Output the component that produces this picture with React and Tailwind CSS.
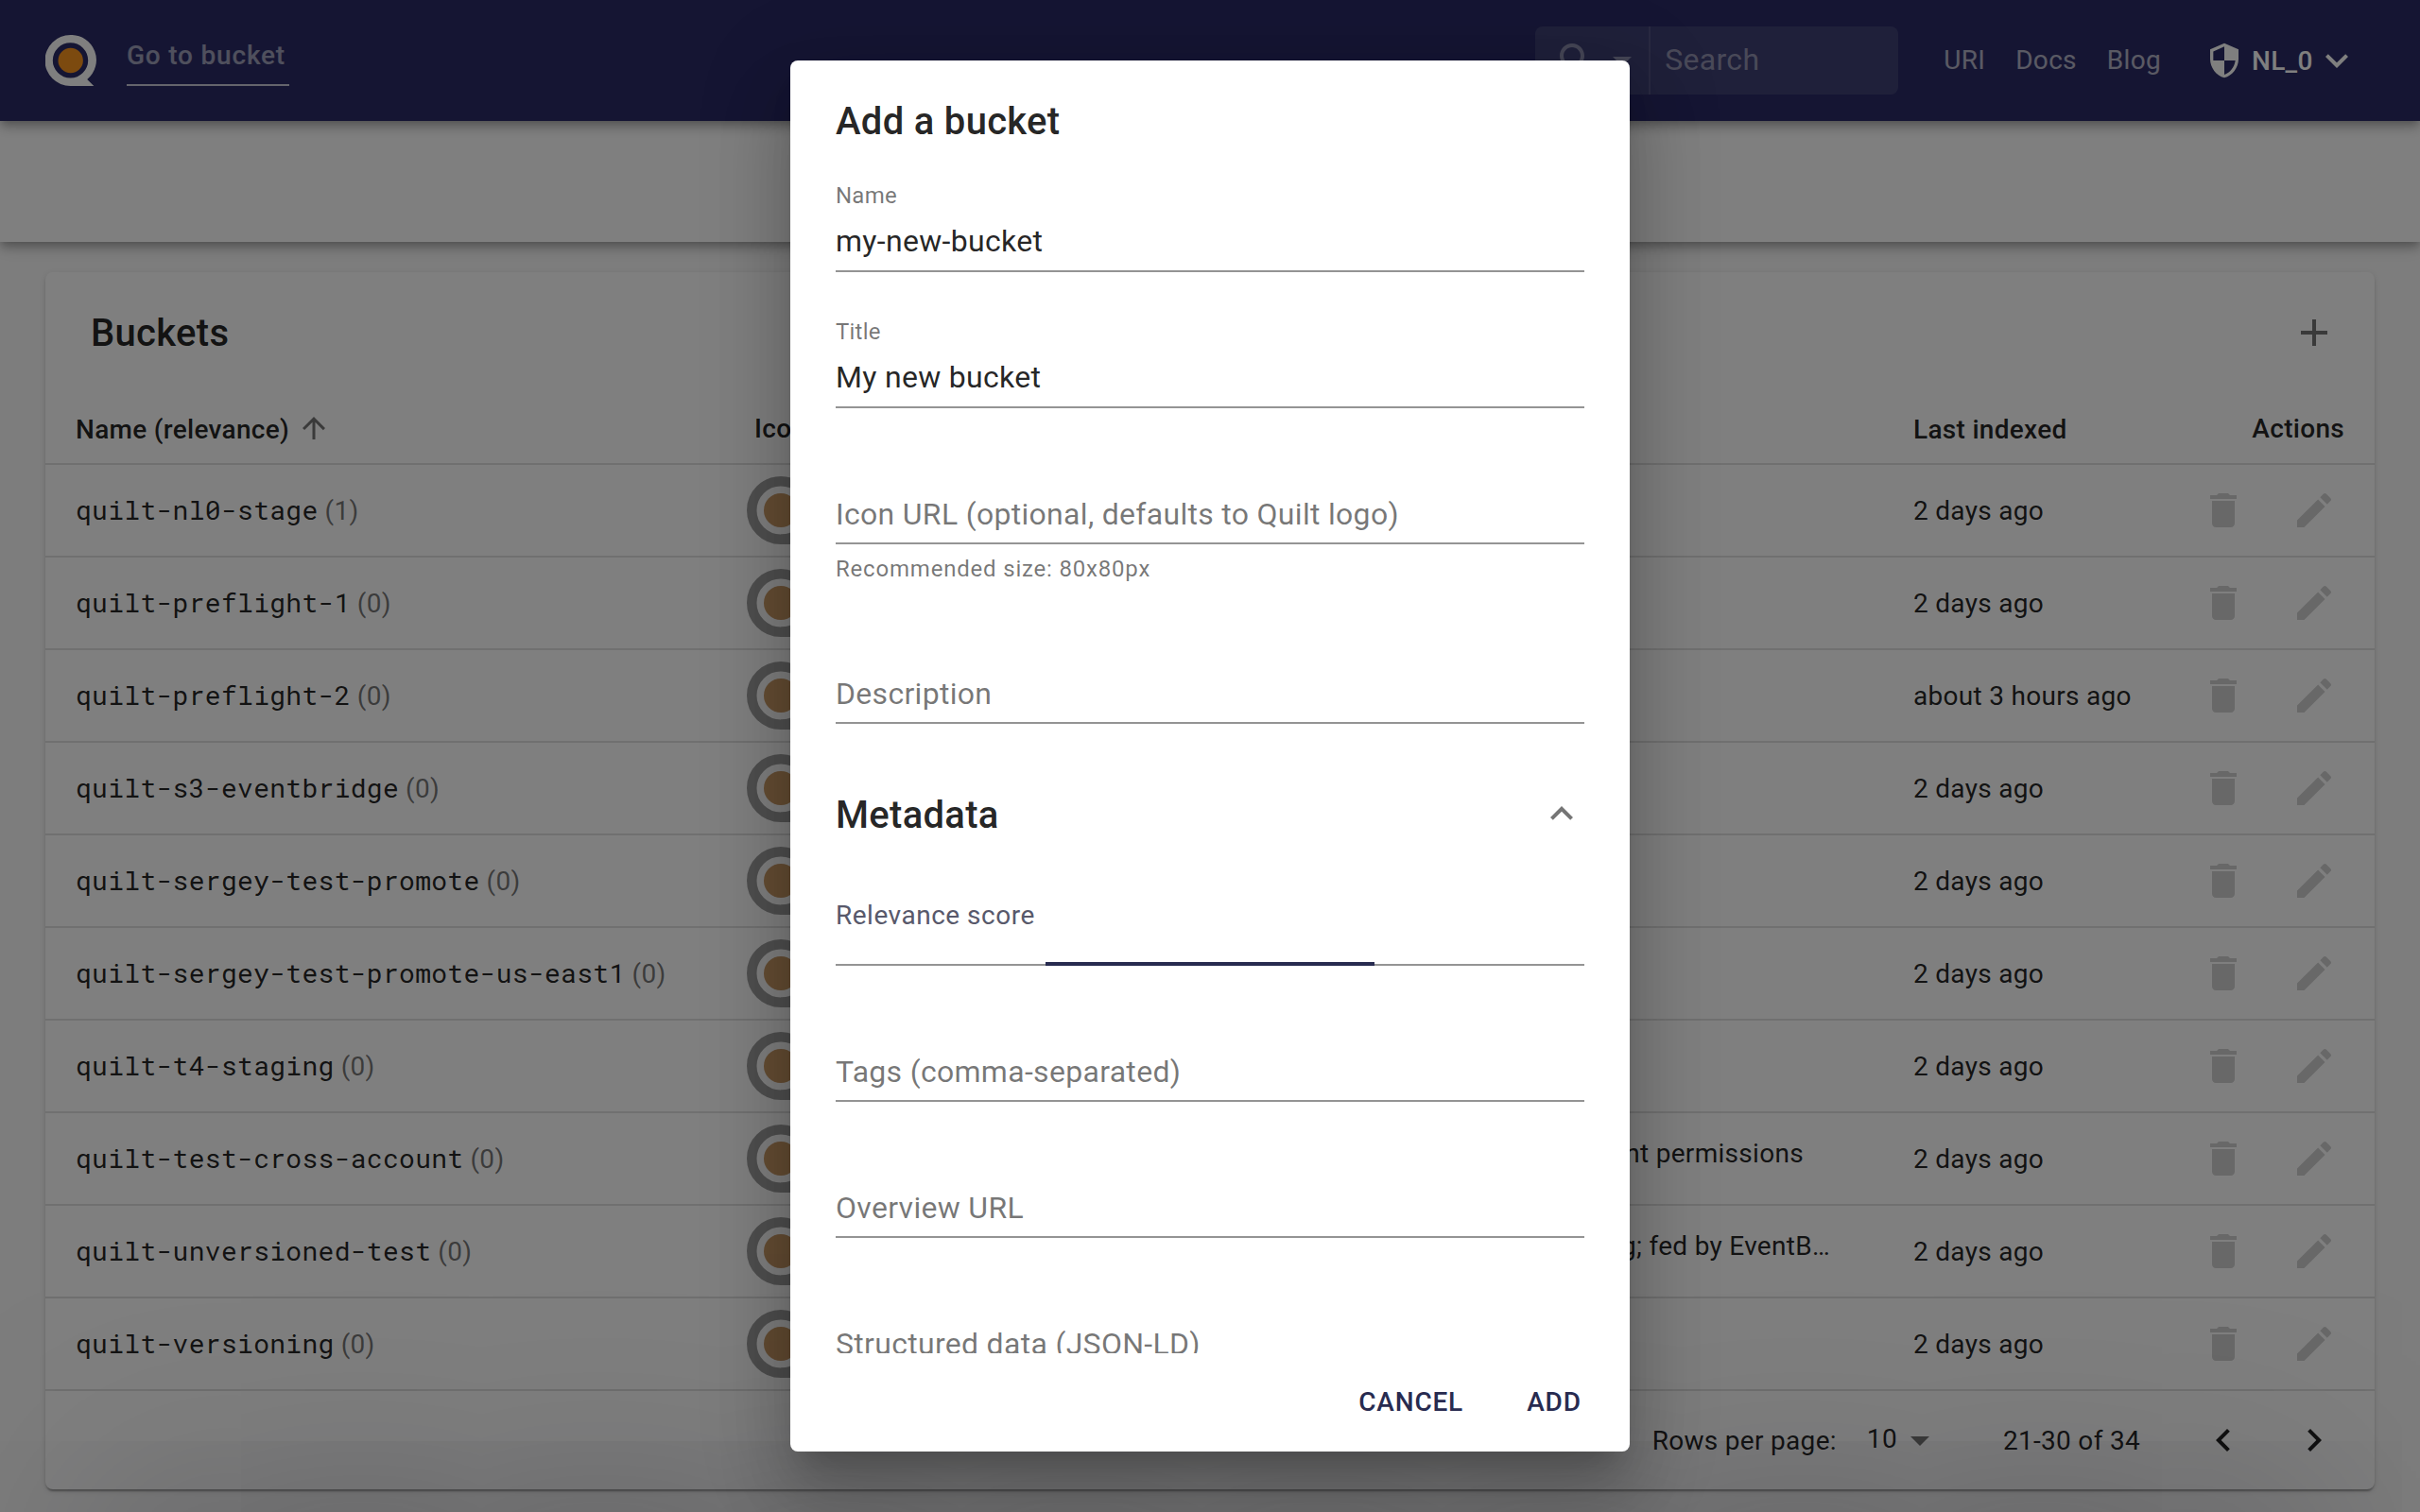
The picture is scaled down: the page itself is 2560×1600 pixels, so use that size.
import React from "react";

const rows = [
  { name: "quilt-nl0-stage", score: 1, indexed: "2 days ago" },
  { name: "quilt-preflight-1", score: 0, indexed: "2 days ago" },
  { name: "quilt-preflight-2", score: 0, indexed: "about 3 hours ago" },
  { name: "quilt-s3-eventbridge", score: 0, indexed: "2 days ago" },
  { name: "quilt-sergey-test-promote", score: 0, indexed: "2 days ago" },
  { name: "quilt-sergey-test-promote-us-east1", score: 0, indexed: "2 days ago" },
  { name: "quilt-t4-staging", score: 0, indexed: "2 days ago" },
  { name: "quilt-test-cross-account", score: 0, indexed: "2 days ago", description: "nt permissions", descClass: "pr-[116px]" },
  { name: "quilt-unversioned-test", score: 0, indexed: "2 days ago", description: "g; fed by EventB…", descClass: "pr-[88px]" },
  { name: "quilt-versioning", score: 0, indexed: "2 days ago" },
];

const paths = {
  add: "M19 13h-6v6h-2v-6H5v-2h6V5h2v6h6v2z",
  remove: "M6 19c0 1.1.9 2 2 2h8c1.1 0 2-.9 2-2V7H6v12zM19 4h-3.5l-1-1h-5l-1 1H5v2h14V4z",
  edit: "M3 17.25V21h3.75L17.81 9.94l-3.75-3.75L3 17.25zM20.71 7.04c.39-.39.39-1.02 0-1.41l-2.34-2.34c-.39-.39-1.02-.39-1.41 0l-1.83 1.83 3.75 3.75 1.83-1.83z",
  up: "M4 12l1.41 1.41L11 7.83V20h2V7.83l5.58 5.59L20 12l-8-8-8 8z",
  left: "M15.41 7.41L14 6l-6 6 6 6 1.41-1.41L10.83 12z",
  right: "M10 6L8.59 7.41 13.17 12l-4.58 4.59L10 18l6-6z",
  expandMore: "M16.59 8.59L12 13.17 7.41 8.59 6 10l6 6 6-6z",
  expandLess: "M12 8l-6 6 1.41 1.41L12 10.83l4.59 4.58L18 14z",
  dropDown: "M7 10l5 5 5-5z",
  search: "M15.5 14h-.79l-.28-.27C15.41 12.59 16 11.11 16 9.5 16 5.91 13.09 3 9.5 3S3 5.91 3 9.5 5.91 16 9.5 16c1.61 0 3.09-.59 4.23-1.57l.27.28v.79l5 4.99L20.49 19l-4.99-5zm-6 0C7.01 14 5 11.99 5 9.5S7.01 5 9.5 5 14 7.01 14 9.5 11.99 14 9.5 14z",
  security: "M12 1L3 5v6c0 5.55 3.84 10.74 9 12 5.16-1.26 9-6.45 9-12V5l-9-4zm0 10.99h7c-.53 4.12-3.28 7.79-7 8.94V12H5V6.3l7-3.11v8.8z",
};

function Icon({ name, className = "size-12" }) {
  return (
    <svg viewBox="0 0 24 24" fill="currentColor" className={`shrink-0 ${className}`}>
      <path d={paths[name]} />
    </svg>
  );
}

function Logo() {
  return (
    <svg viewBox="0 0 54 54" className="h-[54px] w-[54px] shrink-0">
      <path
        fill="#fff"
        fillRule="evenodd"
        d="M26.5 0a26.5 26.5 0 0 1 17.7 47l7.1 7H26.5a27 27 0 0 1 0-54zm0 8.2a18.7 18.7 0 1 0 0 37.4 18.7 18.7 0 0 0 0-37.4z"
      />
      <circle cx="26.7" cy="27" r="13.2" fill="#f8941f" />
    </svg>
  );
}

function BucketIcon() {
  return (
    <svg viewBox="0 0 72 72" className="size-[72px]">
      <circle cx="36" cy="36" r="30.75" fill="none" stroke="#9f9f9f" strokeWidth="10.5" />
      <path d="M36 61.500h20l13 10.500H36z" fill="#9f9f9f" />
      <circle cx="36" cy="36" r="18" fill="#ca9a67" />
    </svg>
  );
}

function Header() {
  return (
    <header className="relative z-20 flex h-32 items-center bg-[#2a2b66] pl-12 pr-16 text-[28px] tracking-[0.3px] text-white shadow-[0_4px_8px_-2px_rgba(0,0,0,0.2),0_8px_10px_0_rgba(0,0,0,0.14),0_2px_20px_0_rgba(0,0,0,0.12)]">
      <Logo />
      <a className="ml-8 flex h-[53px] w-[172px] items-start whitespace-nowrap border-b-2 border-white/75 pt-px leading-[40px] font-medium tracking-[0.8px] text-white/55">
        Go to bucket
      </a>
      <div className="ml-auto flex h-18 w-[384px] items-center rounded-lg bg-white/10">
        <div className="flex h-full w-[122px] items-center border-r-2 border-white/10 pl-5 text-white/40">
          <Icon name="search" />
          <Icon name="dropDown" />
        </div>
        <span className="-mt-0.5 pl-[15px] text-[32px] text-white/45">Search</span>
      </div>
      <nav className="ml-12 flex gap-8 text-white/65">
        <a>URI</a>
        <a>Docs</a>
        <a>Blog</a>
      </nav>
      <div className="ml-[47px] flex items-center">
        <Icon name="security" className="size-10" />
        <span className="ml-[9px] w-[66px] pt-px font-medium">NL_0</span>
        <Icon name="expandMore" />
      </div>
    </header>
  );
}

const grid = "grid grid-cols-[710px_280px_954px_1fr] items-center border-b-2 border-[#e0e0e0] pl-8";

function BucketTable() {
  return (
    <section className="mx-12 mt-8 h-[1288px] rounded-lg bg-white text-[28px] tracking-[0.3px] text-black/87 shadow-[0_4px_2px_-2px_rgba(0,0,0,0.2),0_2px_2px_0_rgba(0,0,0,0.14),0_2px_6px_0_rgba(0,0,0,0.12)]">
      <div className="flex h-32 items-center justify-between pl-12 pr-10">
        <h2 className="pt-0.5 text-[40px] font-medium">Buckets</h2>
        <Icon name="add" className="size-12 text-black/54" />
      </div>
      <div className={`${grid} h-[76px] font-medium`}>
        <div className="flex items-center gap-2">
          <span className="pt-[3px]">Name (relevance)</span>
          <Icon name="up" className="size-9 text-black/54" />
        </div>
        <div className="pt-0.5 pl-2">Icon</div>
        <div />
        <div className="flex justify-between pt-[3px] pr-8">
          <span>Last indexed</span>
          <span className="-mt-px">Actions</span>
        </div>
      </div>
      {rows.map((row) => (
        <div key={row.name} className={`${grid} h-[98px]`}>
          <div className="flex items-center whitespace-nowrap">
            <span className="font-['Roboto_Mono','Liberation_Mono',monospace]">{row.name}</span>
            <span className="ml-[7px] pt-px text-black/54">({row.score})</span>
          </div>
          <BucketIcon />
          <div className={`-mt-[11px] whitespace-nowrap text-right ${row.descClass || ""}`}>{row.description}</div>
          <div className="flex items-center justify-between pr-10 whitespace-nowrap">
            <span className="pt-0.5">{row.indexed}</span>
            <span className="flex gap-12 text-black/18">
              <Icon name="remove" />
              <Icon name="edit" />
            </span>
          </div>
        </div>
      ))}
      <div className="flex h-[104px] items-center justify-end pr-4">
        <span className="pt-px">Rows per page:</span>
        <span className="ml-8 -mt-0.5">10</span>
        <Icon name="dropDown" className="size-12 text-black/54" />
        <span className="ml-16 pt-px">21-30 of 34</span>
        <span className="ml-10 flex">
          <span className="p-6"><Icon name="left" /></span>
          <span className="p-6"><Icon name="right" /></span>
        </span>
      </div>
    </section>
  );
}

function Field({ label, value, helper }) {
  return (
    <div className="mb-12 shrink-0">
      <div className="flex h-24 flex-col border-b-2 border-black/42">
        {value ? (
          <>
            <span className="mt-[3px] text-2xl leading-6 tracking-[0.225px] text-black/54">{label}</span>
            <span className="mt-[17px] leading-[38px] text-black/87">{value}</span>
          </>
        ) : (
          <span className="mt-12 leading-8 text-black/54">{label}</span>
        )}
      </div>
      {helper && <div className="mt-1.5 text-2xl leading-10 tracking-[0.8px] text-black/54">{helper}</div>}
    </div>
  );
}

function AddBucketDialog() {
  return (
    <div className="flex h-[1472px] w-[888px] flex-col rounded-lg bg-white text-[32px] tracking-[0.3px] text-black/87 shadow-[0_22px_30px_-14px_rgba(0,0,0,0.2),0_48px_76px_6px_rgba(0,0,0,0.14),0_18px_92px_16px_rgba(0,0,0,0.12)]">
      <h2 className="px-12 pt-[33px] text-[40px] font-medium leading-16">Add a bucket</h2>
      <div className="flex min-h-0 flex-1 flex-col overflow-hidden px-12 pt-[31px]">
        <Field label="Name" value="my-new-bucket" />
        <Field label="Title" value="My new bucket" />
        <Field label="Icon URL (optional, defaults to Quilt logo)" helper="Recommended size: 80x80px" />
        <Field label="Description" />
        <div className="flex h-24 shrink-0 items-center justify-between">
          <h3 className="pt-0.5 text-[40px] font-medium leading-16">Metadata</h3>
          <Icon name="expandLess" className="-mt-0.5 size-12 text-black/54" />
        </div>
        <div className="mt-9 mb-12 flex h-[76px] shrink-0 flex-col border-b-2 border-black/42">
          <span className="pt-px text-[28px] leading-11 tracking-[0.5px] text-[#58596b]">Relevance score</span>
          <div className="-mb-0.5 mt-auto h-1 w-[348px] self-center bg-[#282b50]" />
        </div>
        <Field label="Tags (comma-separated)" />
        <Field label="Overview URL" />
        <Field label="Structured data (JSON-LD)" />
      </div>
      <div className="flex h-[104px] items-center justify-end gap-4 px-4 text-[28px] font-medium tracking-[0.8px] text-[#282b50]">
        <button className="px-4">CANCEL</button>
        <button className="w-32">ADD</button>
      </div>
    </div>
  );
}

export default function App() {
  return (
    <div className="relative h-[1600px] w-[2560px] overflow-hidden bg-[#fafafa] font-['Roboto',sans-serif]">
      <Header />
      <div className="relative z-10 h-32 bg-white shadow-[0_4px_8px_-2px_rgba(0,0,0,0.2),0_8px_10px_0_rgba(0,0,0,0.14),0_2px_20px_0_rgba(0,0,0,0.12)]" />
      <BucketTable />
      <div className="absolute inset-x-[100px] top-[1600px] z-20 h-[400px] shadow-[0_0_250px_rgba(10,10,25,0.35)]" />
      <div className="absolute inset-0 z-30 flex items-center justify-center bg-black/50">
        <AddBucketDialog />
      </div>
    </div>
  );
}
